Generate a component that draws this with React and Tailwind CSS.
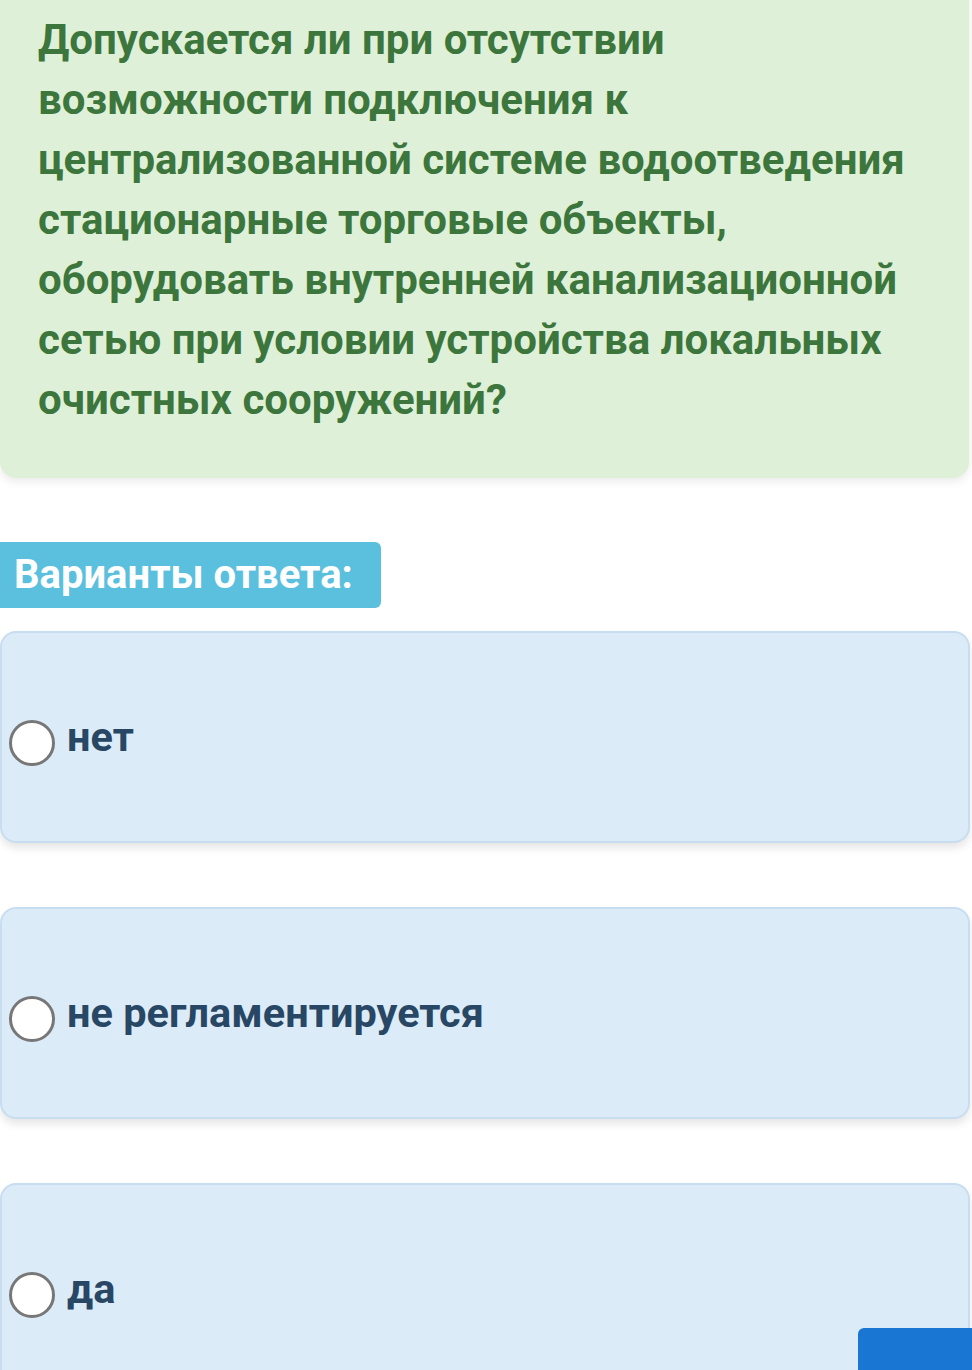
export default function App() {
  const options = ["нет", "не регламентируется", "да"];
  const lines = [
    "Допускается ли при отсутствии",
    "возможности подключения к",
    "централизованной системе водоотведения",
    "стационарные торговые объекты,",
    "оборудовать внутренней канализационной",
    "сетью при условии устройства локальных",
    "очистных сооружений?",
  ];
  return (
    <div className="relative w-[972px] h-[1370px] overflow-hidden bg-white" style={{ fontFamily: "Roboto, 'Noto Sans', sans-serif" }}>
      <div className="-mt-[30px] mr-[3px] rounded-2xl bg-[#dff0d8] pt-[40px] pb-[48px] pl-[38px] pr-[10px] shadow-[0_4px_8px_rgba(0,0,0,0.08)]">
        <p className="text-[42px] leading-[60px] font-bold text-[#3c763d] whitespace-nowrap">
          {lines.map((l, i) => (
            <span key={i} className="block">{l}</span>
          ))}
        </p>
      </div>
      <div className="mt-[64px] flex">
        <div className="h-[66px] w-[381px] rounded-r-md bg-[#5bc0de] pl-[14px] text-[40px] leading-[66px] font-bold text-white">
          Варианты ответа:
        </div>
      </div>
      <div className="mt-[23px] flex flex-col gap-[64px] mr-[2px]">
        {options.map((o) => (
          <div key={o} className="flex h-[212px] items-center gap-[12px] rounded-2xl border-2 border-[#c8def0] bg-[#dcebf8] pl-[7px] shadow-[0_5px_8px_rgba(0,0,0,0.10)]">
            <div className="mt-[12px] h-[46px] w-[46px] shrink-0 rounded-full border-[3px] border-[#777777] bg-white" />
            <span className="text-[41.5px] font-bold text-[#284764]">{o}</span>
          </div>
        ))}
      </div>
      <div className="absolute left-[858px] top-[1328px] h-[60px] w-[130px] rounded-md bg-[#1976d2]" />
    </div>
  );
}
